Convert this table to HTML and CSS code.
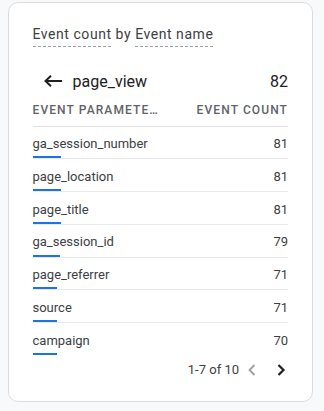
FILE: index.html
```html
<!DOCTYPE html>
<html>
<head>
<meta charset="utf-8">
<link rel="stylesheet" href="styles.css">
</head>
<body>
<div class="card">
  <div class="title"><span class="dim">Event count</span> by <span class="dim">Event name</span></div>
  <div class="drill">
    <div class="drill-left">
      <svg class="back" width="18" height="12" viewBox="0 0 18 12"><path d="M18 6H1.5M7 0.7L1.5 6L7 11.3" fill="none" stroke="#202124" stroke-width="2"/></svg>
      <span>page_view</span>
    </div>
    <span>82</span>
  </div>
  <div class="head">
    <span>Event paramete…</span>
    <span>Event count</span>
  </div>
  <div class="rows">
    <div class="row"><div class="line"><span>ga_session_number</span><span>81</span></div><div class="bar" style="width:28.2px"></div></div>
    <div class="row"><div class="line"><span>page_location</span><span>81</span></div><div class="bar" style="width:28.2px"></div></div>
    <div class="row"><div class="line"><span>page_title</span><span>81</span></div><div class="bar" style="width:28.2px"></div></div>
    <div class="row"><div class="line"><span>ga_session_id</span><span>79</span></div><div class="bar" style="width:27.5px"></div></div>
    <div class="row"><div class="line"><span>page_referrer</span><span>71</span></div><div class="bar" style="width:24.7px"></div></div>
    <div class="row"><div class="line"><span>source</span><span>71</span></div><div class="bar" style="width:24.7px"></div></div>
    <div class="row"><div class="line"><span>campaign</span><span>70</span></div><div class="bar" style="width:24.3px"></div></div>
  </div>
  <div class="pager">
    <span class="pager-text">1-7 of 10</span>
    <svg class="chev prev" width="12" height="12" viewBox="0 0 12 12"><polyline points="8.5,1 3.5,6 8.5,11" fill="none" stroke="#9aa0a6" stroke-width="1.8"/></svg>
    <svg class="chev next" width="12" height="12" viewBox="0 0 12 12"><polyline points="3.5,1 8.5,6 3.5,11" fill="none" stroke="#202124" stroke-width="2.2"/></svg>
  </div>
</div>
</body>
</html>
```
FILE: styles.css
```css
html, body {
  margin: 0;
  padding: 0;
  background: #f8f9fa;
}
body {
  padding: 1.5px 0 0 7.5px;
  font-family: Roboto, "Liberation Sans", sans-serif;
  color: #3c4043;
}
.card {
  box-sizing: border-box;
  width: 305.5px;
  height: 400.5px;
  background: #fff;
  border: 1px solid #dadce0;
  border-radius: 10px;
  padding: 23.5px 24px 0 24px;
}
.title {
  font-size: 14px;
  line-height: 16px;
  letter-spacing: 0.55px;
  color: #3c4043;
}
.dim {
  display: inline-block;
  padding-bottom: 5px;
  background-image: linear-gradient(to right, #9aa0a6 60%, transparent 60%);
  background-size: 5px 1px;
  background-repeat: repeat-x;
  background-position: left bottom;
}
.drill {
  display: flex;
  justify-content: space-between;
  align-items: center;
  height: 24px;
  margin-top: 22px;
  font-size: 16px;
  color: #202124;
}
.drill-left {
  display: flex;
  align-items: center;
  gap: 11px;
  padding-left: 11px;
}
.back {
  display: block;
}
.head {
  display: flex;
  justify-content: space-between;
  margin-top: 9px;
  font-size: 12px;
  line-height: 16px;
  font-weight: 500;
  letter-spacing: 1.1px;
  text-transform: uppercase;
  color: #5f6368;
  padding-bottom: 7.5px;
  border-bottom: 1px solid #e0e0e0;
}
.row {
  padding-top: 7.5px;
  border-bottom: 1px solid #e8eaed;
}
.row:last-child {
  border-bottom: none;
}
.line {
  display: flex;
  justify-content: space-between;
  font-size: 13px;
  line-height: 20px;
  color: #3c4043;
}
.bar {
  height: 2px;
  margin-top: 2.3px;
  background: #1a73e8;
}
.pager {
  display: flex;
  justify-content: flex-end;
  align-items: center;
  height: 24px;
  margin-top: 2.5px;
  font-size: 13px;
  color: #3c4043;
}
.chev {
  display: block;
}
.prev {
  margin-left: 7px;
}
.next {
  margin-left: 17px;
  margin-right: 1px;
}
```
